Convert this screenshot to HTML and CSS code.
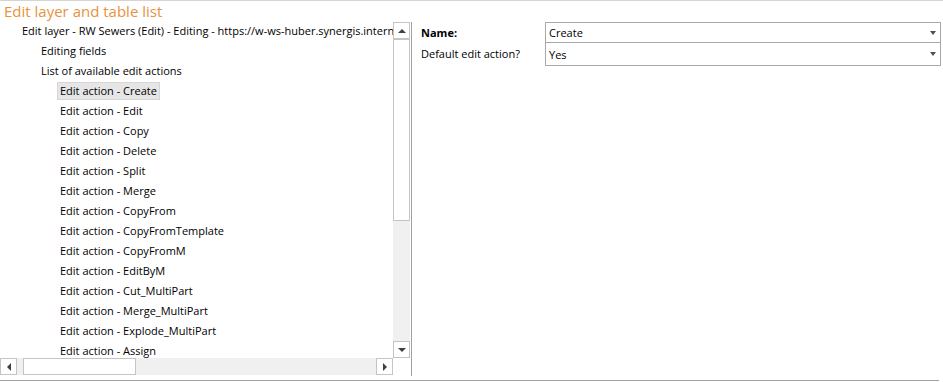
FILE: index.html
```html
<!DOCTYPE html>
<html lang="en">
<head>
  <meta charset="UTF-8">
  <title>Edit layer and table list</title>
  <link rel="stylesheet" href="styles.css">
</head>
<body>
  <div class="page">

    <!-- Section title -->
    <div class="title">Edit layer and table list</div>

    <div class="split">

      <!-- Left: tree with scrollbars -->
      <div class="tree-pane">
        <div class="tree-row">
          <ul class="tree">
            <li class="lvl0"><span class="node">Edit layer - RW Sewers (Edit) - Editing - https://w-ws-huber.synergis.intern</span></li>
            <li class="lvl1"><span class="node">Editing fields</span></li>
            <li class="lvl1"><span class="node">List of available edit actions</span></li>
            <li class="lvl2"><span class="node selected">Edit action - Create</span></li>
            <li class="lvl2"><span class="node">Edit action - Edit</span></li>
            <li class="lvl2"><span class="node">Edit action - Copy</span></li>
            <li class="lvl2"><span class="node">Edit action - Delete</span></li>
            <li class="lvl2"><span class="node">Edit action - Split</span></li>
            <li class="lvl2"><span class="node">Edit action - Merge</span></li>
            <li class="lvl2"><span class="node">Edit action - CopyFrom</span></li>
            <li class="lvl2"><span class="node">Edit action - CopyFromTemplate</span></li>
            <li class="lvl2"><span class="node">Edit action - CopyFromM</span></li>
            <li class="lvl2"><span class="node">Edit action - EditByM</span></li>
            <li class="lvl2"><span class="node">Edit action - Cut_MultiPart</span></li>
            <li class="lvl2"><span class="node">Edit action - Merge_MultiPart</span></li>
            <li class="lvl2"><span class="node">Edit action - Explode_MultiPart</span></li>
            <li class="lvl2"><span class="node">Edit action - Assign</span></li>
          </ul>

          <!-- vertical scrollbar -->
          <div class="vscroll">
            <div class="sb-btn"><span class="arr arr-up"></span></div>
            <div class="vtrack">
              <div class="vthumb"></div>
            </div>
            <div class="sb-btn"><span class="arr arr-down"></span></div>
          </div>
        </div>

        <!-- horizontal scrollbar -->
        <div class="hscroll-row">
          <div class="hscroll">
            <div class="sb-btn"><span class="arr arr-left"></span></div>
            <div class="htrack">
              <div class="hthumb"></div>
            </div>
            <div class="sb-btn"><span class="arr arr-right"></span></div>
          </div>
          <div class="corner"></div>
        </div>
      </div>

      <!-- Right: properties -->
      <div class="props">
        <div class="prop-label bold">Name:</div>
        <div class="combo"><span>Create</span><span class="drop"></span></div>
        <div class="prop-label">Default edit action?</div>
        <div class="combo"><span>Yes</span><span class="drop"></span></div>
      </div>

    </div>

    <div class="bottom-rule"></div>
  </div>
</body>
</html>
```

FILE: styles.css
```css
/* base */
html, body {
  margin: 0;
  padding: 0;
  background: #fff;
}

.page {
  width: 943px;
  height: 382px;
  border-top: 1px solid #d4d4d4;
  box-sizing: border-box;
  font-family: "Open Sans", "Noto Sans", sans-serif;
  font-size: 11px;
  color: #000;
}

/* orange section heading */
.title {
  height: 21px;
  padding-left: 4px;
  font-size: 15px;
  line-height: 20px;
  color: #e9923c;
}

/* tree on the left, properties on the right */
.split {
  display: flex;
  height: 354px;
}

.tree-pane {
  width: 411px;
  border-right: 1px solid #a0a0a0;
  display: flex;
  flex-direction: column;
}

.tree-row {
  display: flex;
  height: 336px;
}

/* tree list */
.tree {
  list-style: none;
  margin: 0;
  padding: 0;
  width: 393px;
  overflow: hidden;
  white-space: nowrap;
}
.tree li {
  height: 20px;
  line-height: 16px;
  box-sizing: border-box;
}
.tree .lvl0 { padding-left: 19px; }
.tree .lvl1 { padding-left: 38px; }
.tree .lvl2 { padding-left: 57px; }

.node {
  display: inline-block;
  padding: 0 2px;
  border: 1px solid transparent;
}
.node.selected {
  background: #e6e6e6;
  border-color: #d6d6d6;
}

/* scrollbars */
.vscroll {
  width: 17px;
  display: flex;
  flex-direction: column;
  background: #f0f0f0;
}
.sb-btn {
  width: 17px;
  height: 17px;
  box-sizing: border-box;
  border: 1px solid #c4c4c4;
  background: #fff;
  display: flex;
  align-items: center;
  justify-content: center;
}
.vtrack {
  flex: 1;
}
.vthumb {
  height: 182px;
  box-sizing: border-box;
  border: 1px solid #c4c4c4;
  background: #fff;
}

.hscroll-row {
  display: flex;
  height: 17px;
}
.hscroll {
  width: 393px;
  display: flex;
  background: #f0f0f0;
}
.htrack {
  flex: 1;
  padding-left: 6px;
}
.hthumb {
  width: 113px;
  height: 17px;
  box-sizing: border-box;
  border: 1px solid #c4c4c4;
  background: #fff;
}
.corner {
  flex: 1;
  background: #fff;
}

/* tiny arrow glyphs */
.arr {
  width: 0;
  height: 0;
  border: 4px solid transparent;
}
.arr-up    { border-bottom-color: #404040; border-top-width: 0; }
.arr-down  { border-top-color: #404040; border-bottom-width: 0; }
.arr-left  { border-right-color: #404040; border-left-width: 0; }
.arr-right { border-left-color: #404040; border-right-width: 0; }

/* property grid */
.props {
  flex: 1;
  display: grid;
  grid-template-columns: 124px 396px;
  grid-auto-rows: 21px;
  align-content: start;
  padding-left: 9px;
}
.prop-label {
  line-height: 21px;
}
.bold {
  font-weight: bold;
}
.combo {
  border: 1px solid #a8a8a8;
  display: flex;
  justify-content: space-between;
  align-items: center;
  padding-left: 3px;
  padding-right: 4px;
}
.combo + .prop-label + .combo {
  border-top: 0;
  height: 22px;
}
.drop {
  width: 0;
  height: 0;
  border-left: 3px solid transparent;
  border-right: 3px solid transparent;
  border-top: 4px solid #505050;
}

.bottom-rule {
  margin-top: 4px;
  width: 939px;
  height: 1px;
  background: #a0a0a0;
}
```
